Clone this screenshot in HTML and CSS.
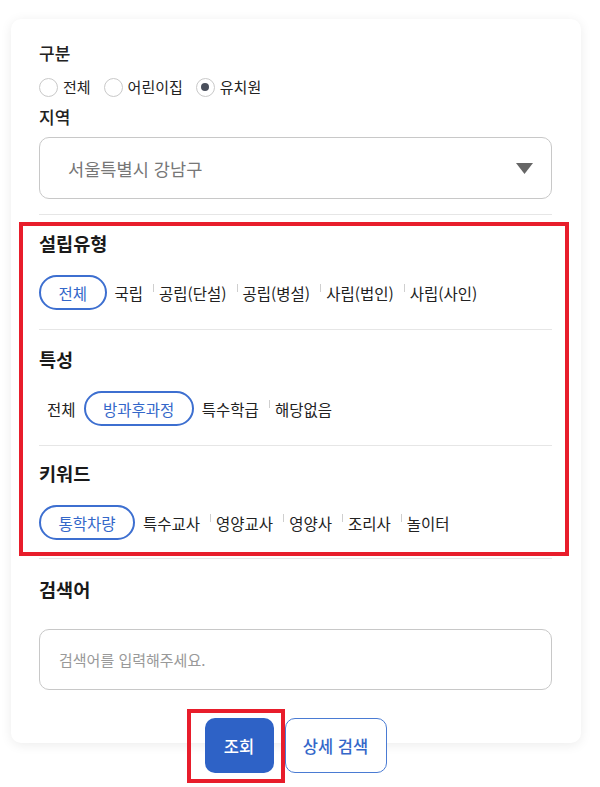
FILE: index.html
```html
<!DOCTYPE html>
<html lang="ko">
<head>
<meta charset="utf-8">
<title>검색</title>
<link rel="stylesheet" href="styles.css">
</head>
<body>
<div class="card">
  <div class="field-label">구분</div>
  <div class="radios">
    <label class="radio"><span class="circle"></span>전체</label>
    <label class="radio"><span class="circle"></span>어린이집</label>
    <label class="radio"><span class="circle checked"></span>유치원</label>
  </div>
  <div class="field-label region">지역</div>
  <div class="select">
    <span class="select-text">서울특별시 강남구</span>
    <svg class="caret" width="17" height="11" viewBox="0 0 17 11"><polygon points="0,0 17,0 8.5,11" fill="#666"/></svg>
  </div>
  <div class="divider divider-top"></div>

  <div class="highlight">
    <div class="group g1">
      <div class="group-title">설립유형</div>
      <div class="options">
        <span class="pill">전체</span>
        <span class="opt">국립</span>
        <span class="opt sep">공립(단설)</span>
        <span class="opt sep">공립(병설)</span>
        <span class="opt sep">사립(법인)</span>
        <span class="opt sep">사립(사인)</span>
      </div>
    </div>
    <div class="divider"></div>
    <div class="group g2">
      <div class="group-title">특성</div>
      <div class="options">
        <span class="opt">전체</span>
        <span class="pill">방과후과정</span>
        <span class="opt">특수학급</span>
        <span class="opt sep">해당없음</span>
      </div>
    </div>
    <div class="divider"></div>
    <div class="group g3">
      <div class="group-title">키워드</div>
      <div class="options">
        <span class="pill">통학차량</span>
        <span class="opt">특수교사</span>
        <span class="opt sep">영양교사</span>
        <span class="opt sep">영양사</span>
        <span class="opt sep">조리사</span>
        <span class="opt sep">놀이터</span>
      </div>
    </div>
  </div>

  <div class="divider divider-after"></div>
  <div class="group-title search-title">검색어</div>
  <div class="search-input">검색어를 입력해주세요.</div>

  <div class="actions">
    <button class="btn btn-primary">조회</button>
    <button class="btn btn-outline">상세 검색</button>
  </div>
</div>
</body>
</html>
```

FILE: styles.css
```css
* { box-sizing: border-box; }

html, body {
  min-height: 787px;
}

body {
  margin: 0;
  background: #ffffff;
  font-family: "Noto Sans CJK KR", "Noto Sans", "Liberation Sans", sans-serif;
  color: #222;
}

.card {
  display: flow-root;
  width: 570px;
  margin: 19px 0 0 11px;
  padding: 22px 29px 0 28px;
  background: #fff;
  border-radius: 10px;
  box-shadow: 0 2px 12px rgba(0, 0, 0, 0.08);
}

.field-label {
  font-size: 17px;
  font-weight: 500;
  line-height: 24px;
  color: #222;
}

.field-label.region { margin-top: 8px; }

.radios {
  display: flex;
  align-items: center;
  height: 20px;
  margin-top: 12px;
}

.radio {
  display: flex;
  align-items: center;
  gap: 5px;
  margin-right: 13px;
  font-size: 15px;
  line-height: 20px;
  color: #222;
}

.circle {
  width: 19px;
  height: 19px;
  border: 1px solid #c9c9c9;
  border-radius: 50%;
  background: #fff;
  display: flex;
  align-items: center;
  justify-content: center;
}

.circle.checked::after {
  content: "";
  width: 8px;
  height: 8px;
  border-radius: 50%;
  background: #4a4f5c;
}

.select {
  margin-top: 8px;
  height: 62px;
  border: 1px solid #c8c8c8;
  border-radius: 10px;
  display: flex;
  align-items: center;
  justify-content: space-between;
  padding: 0 18px 0 28px;
}

.select-text {
  font-size: 17.6px;
  color: #777;
}

.divider {
  height: 1px;
  background: #e6e6e6;
}

.divider-top { margin-top: 15px; }

.highlight {
  margin: 7px -17px 0 -20px;
  border: 4px solid #e81d2b;
  padding: 0 13px 0 16px;
}

.group-title {
  font-size: 18.6px;
  font-weight: 700;
  line-height: 24px;
  color: #1a1a1a;
}

.g1 { padding: 5px 0 19px; }
.g2 { padding: 17px 0 19px; }
.g3 { padding: 15px 0 12px; }

.options {
  display: flex;
  align-items: center;
  height: 35px;
  margin-top: 20px;
  font-size: 15.5px;
  line-height: 22px;
  color: #222;
}

.pill {
  height: 35px;
  display: flex;
  align-items: center;
  padding: 0 17.5px;
  border: 2px solid #3d6fd0;
  border-radius: 18px;
  color: #3467c9;
}

.opt {
  padding: 0 8px;
  white-space: nowrap;
}

.opt.sep { padding-left: 2px; }

.opt.sep::before {
  content: "";
  display: inline-block;
  width: 1px;
  height: 8px;
  background: #cfcfcf;
  margin-right: 5px;
  vertical-align: 8px;
}

.divider-after { margin-top: 2px; }

.search-title { margin-top: 18px; }

.search-input {
  margin-top: 28px;
  height: 61px;
  border: 1px solid #c8c8c8;
  border-radius: 10px;
  display: flex;
  align-items: center;
  padding-left: 19px;
  font-size: 15px;
  color: #999;
}

.actions {
  display: flex;
  justify-content: center;
  gap: 11px;
  margin-top: 28px;
  margin-bottom: -30px;
}

.btn {
  height: 55px;
  border-radius: 10px;
  font-family: "Noto Sans CJK KR", "Noto Sans", sans-serif;
  font-size: 16.5px;
  font-weight: 500;
  cursor: pointer;
}

.btn-primary {
  position: relative;
  width: 69px;
  background: #2e62c6;
  border: none;
  color: #fff;
}

.btn-primary::after {
  content: "";
  position: absolute;
  top: -9px;
  left: -18px;
  right: -11px;
  bottom: -10px;
  border: 4px solid #e81d2b;
}

.btn-outline {
  width: 102px;
  background: #fff;
  border: 1px solid #4a7bd3;
  color: #3467c9;
}
```
